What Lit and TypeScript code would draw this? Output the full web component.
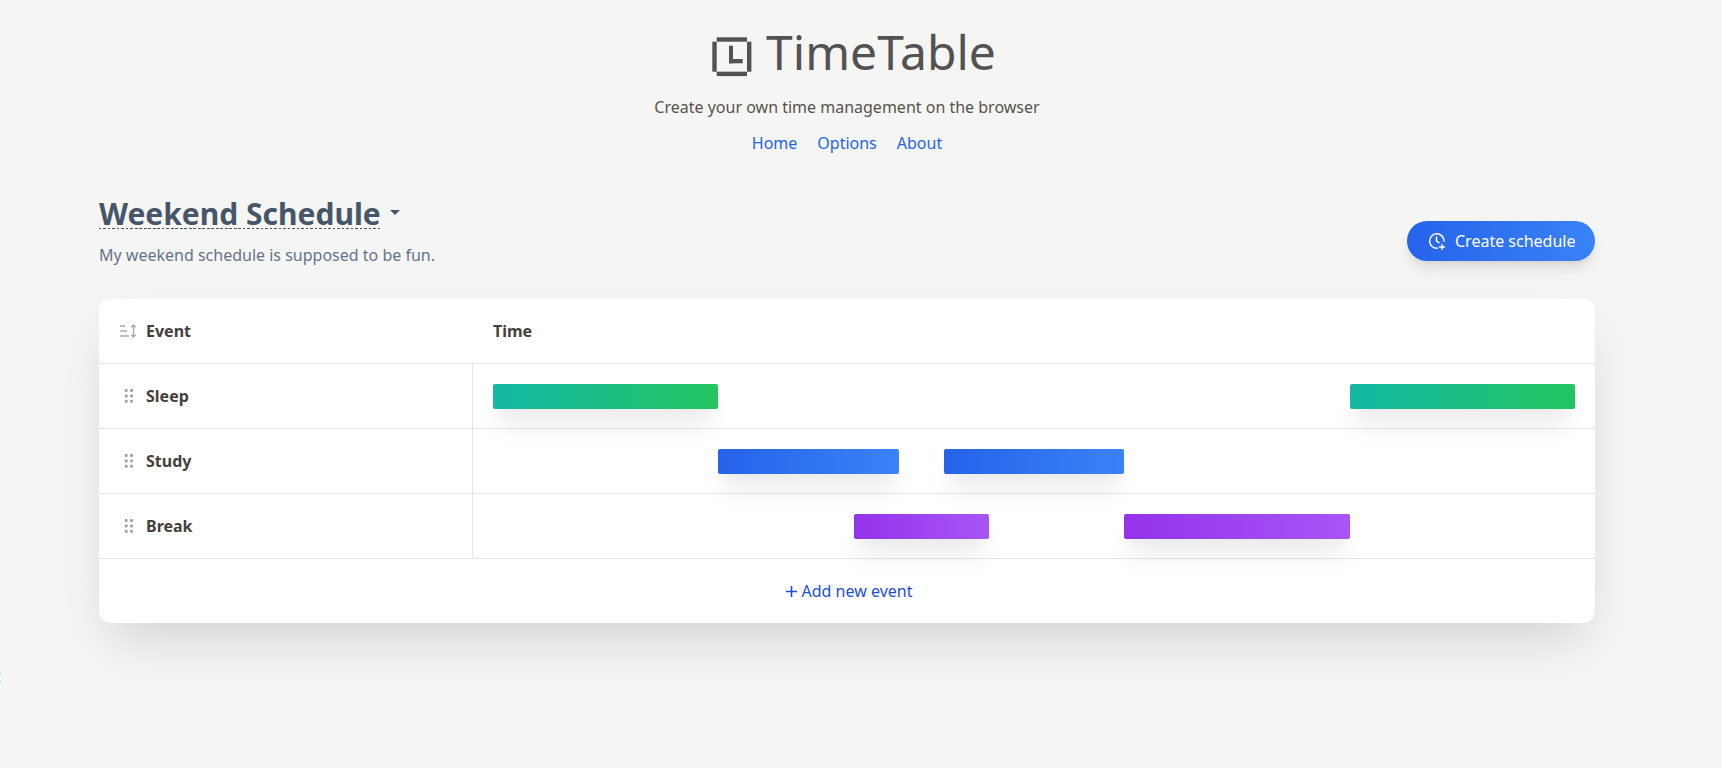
import { LitElement, html, css, svg } from "lit";
import { customElement } from "lit/decorators.js";

const rows = [
  { name: "Sleep", kind: "green", spans: [[0, 5], [19, 24]] },
  { name: "Study", kind: "blue", spans: [[5, 9], [10, 14]] },
  { name: "Break", kind: "purple", spans: [[8, 11], [14, 19]] },
];

const grip = svg`<svg class="grip" width="10" height="14" viewBox="0 0 10 14" fill="#a3a3a3"><rect x="0.7" y="0" width="3" height="3" rx="1"/><rect x="6" y="0" width="3" height="3" rx="1"/><rect x="0.7" y="5.4" width="3" height="3" rx="1"/><rect x="6" y="5.4" width="3" height="3" rx="1"/><rect x="0.7" y="10.7" width="3" height="3" rx="1"/><rect x="6" y="10.7" width="3" height="3" rx="1"/></svg>`;

@customElement("app-root")
export class AppRoot extends LitElement {
  static styles = css`
    :host { display: block; position: relative; min-height: 768px; background: #f5f5f4; font-family: "Noto Sans", sans-serif; color: #44403c; box-sizing: border-box; padding: 20px 28px 0 0; }
    * { box-sizing: border-box; }
    header { display: flex; flex-direction: column; align-items: center; }
    h1 { margin: 0 0 0 14px; display: flex; align-items: center; gap: 14px; font-size: 48px; line-height: 64px; font-weight: 400; color: #525252; }
    h1 svg { display: block; margin-top: 10px; }
    .tag { margin: 11px 0 0; font-size: 16px; line-height: 24px; color: #57534e; }
    nav { display: flex; gap: 20px; margin-top: 12px; font-size: 16px; line-height: 24px; color: #2563eb; }
    main { width: 1496px; margin: 45px auto 0; }
    .top { display: flex; justify-content: space-between; align-items: flex-end; margin-bottom: 32px; }
    .title { display: flex; align-items: center; gap: 9px; }
    h2 { margin: 0; font-size: 30px; height: 29px; line-height: 27px; font-weight: 700; color: #475569; background: repeating-linear-gradient(to right, #475569 0 2.5px, transparent 2.5px 4.5px) left bottom / 100% 1px no-repeat; }
    .caret { width: 0; height: 0; border-left: 5.5px solid transparent; border-right: 5.5px solid transparent; border-top: 5.5px solid #475569; margin-top: -4px; }
    .desc { margin: 14px 0 0; font-size: 16px; line-height: 24px; color: #64748b; }
    .btn { display: flex; align-items: center; gap: 9px; width: 188px; height: 40px; margin-bottom: 6px; padding-left: 21px; border-radius: 20px; color: #fff; font-size: 16px; background: linear-gradient(to right, #2563eb, #3b82f6); box-shadow: 0 10px 15px -3px rgba(0,0,0,.1), 0 4px 6px -2px rgba(0,0,0,.05); }
    .card { background: #fff; border-radius: 12px; box-shadow: 0 25px 50px -12px rgba(0,0,0,.15); overflow: hidden; }
    .row { display: grid; grid-template-columns: 374px 1fr; height: 65px; border-bottom: 1px solid #e7e5e4; }
    .name { display: flex; align-items: center; gap: 12px; padding-left: 25px; font-size: 16px; font-weight: 700; color: #44403c; border-right: 1px solid #e7e5e4; }
    .head .name { border-right: none; padding-left: 21px; gap: 9px; }
    .time { padding: 0 20px; display: flex; align-items: center; font-weight: 700; font-size: 16px; }
    .grid { display: grid; grid-template-columns: repeat(24, 1fr); width: 100%; height: 25px; }
    .bar { grid-row: 1; border-radius: 2px; box-shadow: 0 20px 25px -5px rgba(0,0,0,.1), 0 10px 10px -5px rgba(0,0,0,.04); }
    .green { background: linear-gradient(to right, #14b8a6, #22c55e); }
    .blue { background: linear-gradient(to right, #2563eb, #3b82f6); }
    .purple { background: linear-gradient(to right, #9333ea, #a855f7); }
    .add { height: 64px; display: flex; align-items: center; justify-content: center; gap: 5px; padding-left: 4px; font-size: 16px; color: #1d4ed8; }
    .speck { position: absolute; left: 0; top: 672px; width: 1px; height: 2px; background: #b8e8f5; box-shadow: 0 8px 0 #b8e8f5; }
  `;

  render() {
    return html`
      <header>
        <h1>
          <svg width="40" height="40" viewBox="0 0 40 40" fill="#525252">
            <rect x="4.7" y="0.3" width="30.3" height="4.4"/><rect x="4.7" y="34.7" width="30.3" height="4.4"/>
            <rect x="0.3" y="4.7" width="4.4" height="30"/><rect x="35" y="4.7" width="4.4" height="30"/>
            <rect x="17" y="8.7" width="4" height="17.6"/><rect x="17" y="22" width="13.7" height="4.3"/>
          </svg>
          TimeTable
        </h1>
        <p class="tag">Create your own time management on the browser</p>
        <nav><span>Home</span><span>Options</span><span>About</span></nav>
      </header>
      <main>
        <div class="top">
          <div>
            <div class="title"><h2>Weekend Schedule</h2><span class="caret"></span></div>
            <p class="desc">My weekend schedule is supposed to be fun.</p>
          </div>
          <div class="btn">
            <svg width="18" height="18" viewBox="0 0 18 18" fill="none" stroke="#fff" stroke-width="1.5" stroke-linecap="round" stroke-linejoin="round">
              <path d="M16 9a7.2 7.2 0 1 0-6.5 7.2"/><path d="M8.5 5v4.2l2.5 1.5"/><path d="M14 12.5v5M11.5 15h5"/>
            </svg>
            Create schedule
          </div>
        </div>
        <div class="card">
          <div class="row head">
            <div class="name">
              <svg width="17" height="14" viewBox="0 0 17 14" fill="none" stroke="#a8a8b0" stroke-width="1.4">
                <path d="M0 2h5M0 7h7M0 12h9"/><path d="M13.5 1v12M11.3 3.2 13.5 1l2.2 2.2M11.3 10.8 13.5 13l2.2-2.2"/>
              </svg>
              Event
            </div>
            <div class="time">Time</div>
          </div>
          ${rows.map((r) => html`
            <div class="row">
              <div class="name">${grip}${r.name}</div>
              <div class="time">
                <div class="grid">
                  ${r.spans.map((s) => html`<div class="bar ${r.kind}" style="grid-column:${s[0] + 1} / ${s[1] + 1}"></div>`)}
                </div>
              </div>
            </div>`)}
          <div class="add">
            <svg width="11" height="11" viewBox="0 0 11 11" stroke="#1d4ed8" stroke-width="1.6"><path d="M5.5 0v11M0 5.5h11"/></svg>
            <span>Add new event</span>
          </div>
        </div>
      </main>
      <div class="speck"></div>
    `;
  }
}
